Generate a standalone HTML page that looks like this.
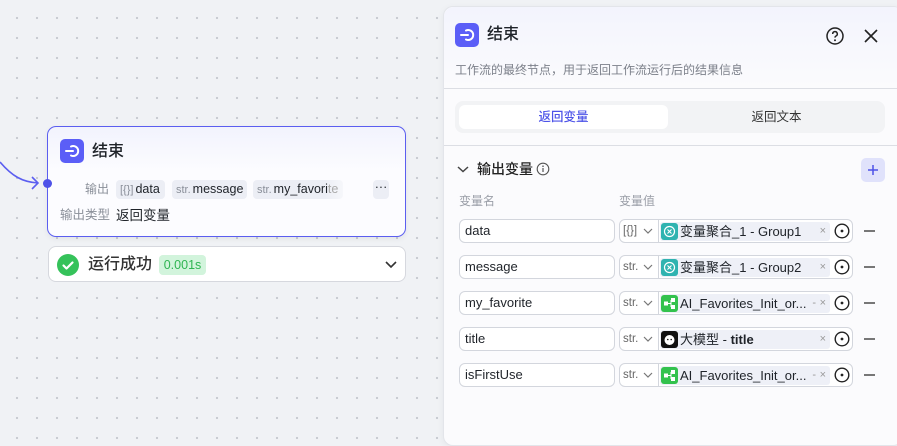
<!DOCTYPE html>
<html><head><meta charset="utf-8"><style>
*{box-sizing:border-box;margin:0;padding:0}
body{width:897px;height:438px;overflow:hidden;position:relative;font-family:"Liberation Sans","Noto Sans CJK SC",sans-serif;color:#1f2329;
background-color:#f0f2f5;background-image:radial-gradient(circle,#c9ccd2 1.1px,transparent 1.3px);background-size:20px 20px;background-position:7px 8px}
.a{position:absolute}
.node{left:47px;top:126px;width:359px;height:111px;border:1px solid #5b5ef0;border-radius:9px;background:linear-gradient(#f2f3fd,#fcfcff 40%);box-shadow:0 2px 6px rgba(0,0,0,.06)}
.ic{width:24px;height:24px;border-radius:5px;background:#5b5ef7}
.tag{height:19px;border-radius:4px;background:#eceef5;font-size:12.5px;line-height:19px;padding:0 4px;color:#1f2329;white-space:nowrap;overflow:hidden}
.tag i{font-style:normal;color:#8a8f99;font-size:11px;margin-right:2px}
.succ{left:48px;top:246px;width:358px;height:36px;border:1px solid #d6d8de;border-radius:8px;background:#fff}
.panel{left:443px;top:6px;width:460px;height:440px;background:#fbfbfd;border:1px solid #e3e5ea;border-radius:10px;box-shadow:0 2px 8px rgba(0,0,0,.05)}
.inp{height:24px;border:1px solid #d3d6dd;border-radius:6px;background:#fff;font-size:13px;line-height:22px;padding-left:5px;color:#1f2329}
.val{height:24px;border:1px solid #d3d6dd;border-radius:6px;background:#fff}
.chip{position:absolute;left:40px;top:2px;width:170px;height:19px;background:#eef0f7;border-radius:3px;font-size:13px;line-height:19px;white-space:nowrap}
.ci{position:absolute;left:1px;top:1px;width:17px;height:17px;border-radius:3px}
.chip span{position:absolute;left:20px;top:0;color:#1f2329}
.chip b{position:absolute;right:4px;top:0;font-weight:normal;color:#999;font-size:11px}
.ty{position:absolute;left:3px;top:0;font-size:11.5px;line-height:22px;color:#666}
</style></head><body>
<svg class="a" style="left:0;top:150px" width="50" height="50"><path d="M0 12 C12 26 22 32 38 33" stroke="#5b5ef0" stroke-width="1.6" fill="none"/><path d="M32 27 L38 33 L32 39" stroke="#5b5ef0" stroke-width="1.6" fill="none"/></svg>
<div class="a node">
 <div class="a ic" style="left:12px;top:12px"><svg width="24" height="24"><path d="M6 12h7" stroke="#fff" stroke-width="2" stroke-linecap="round"/><path d="M11 7.5a5 5 0 1 1 0 9" stroke="#fff" stroke-width="2" fill="none" stroke-linecap="round"/></svg></div>
 <div class="a" style="left:44px;top:14px;font-size:16px;font-weight:500;line-height:22px">结束</div>
 <div class="a" style="left:37px;top:53px;font-size:12px;color:#8a8f99;line-height:19px">输出</div>
 <div class="a tag" style="left:68px;top:53px;width:49px"><i>[{}]</i>data</div>
 <div class="a tag" style="left:124px;top:53px;width:75px"><i>str.</i>message</div>
 <div class="a tag" style="left:205px;top:53px;width:90px;background:linear-gradient(90deg,#eceef5 80%,#f6f7fb)"><i>str.</i>my_favori<span style="color:#aaa">te</span></div>
 <div class="a tag" style="left:325px;top:53px;width:16px;text-align:center;padding:0;line-height:15px">···</div>
 <div class="a" style="left:12px;top:79px;font-size:12.5px;color:#8a8f99;line-height:19px">输出类型</div>
 <div class="a" style="left:68px;top:79px;font-size:13.5px;line-height:19px">返回变量</div>
</div>
<div class="a" style="left:43px;top:179px;width:9px;height:9px;border-radius:50%;background:#4f52e8"></div>
<div class="a succ">
 <svg class="a" style="left:8px;top:7px" width="22" height="22"><circle cx="11" cy="11" r="11" fill="#35c25a"/><path d="M6.5 11.5l3 3 6-6" stroke="#fff" stroke-width="2.2" fill="none" stroke-linecap="round" stroke-linejoin="round"/></svg>
 <div class="a" style="left:39px;top:7px;font-size:16px;font-weight:500;line-height:22px;color:#333">运行成功</div>
 <div class="a" style="left:110px;top:8px;width:47px;height:20px;border-radius:4px;background:#d2f4dc;color:#2fb552;font-size:12.5px;line-height:20px;text-align:center">0.001s</div>
 <svg class="a" style="left:336px;top:13px" width="12" height="10"><path d="M1 2l5 5 5-5" stroke="#333" stroke-width="1.6" fill="none"/></svg>
</div>

<div class="a panel">
 <div class="a" style="left:0;top:0;width:460px;height:80px;background:linear-gradient(#f3f4fd,#fbfbfd);border-radius:10px 10px 0 0"></div>
 <div class="a ic" style="left:11px;top:16px"><svg width="24" height="24"><path d="M6 12h7" stroke="#fff" stroke-width="2" stroke-linecap="round"/><path d="M11 7.5a5 5 0 1 1 0 9" stroke="#fff" stroke-width="2" fill="none" stroke-linecap="round"/></svg></div>
 <div class="a" style="left:43px;top:17px;font-size:16px;font-weight:500;line-height:22px">结束</div>
 <svg class="a" style="left:381px;top:19px" width="20" height="20"><circle cx="10" cy="10" r="8" stroke="#222" stroke-width="1.5" fill="none"/><path d="M7.7 8a2.3 2.3 0 1 1 3.3 2c-.8.4-1 .9-1 1.6" stroke="#222" stroke-width="1.5" fill="none"/><circle cx="10" cy="14.3" r="1" fill="#222"/></svg>
 <svg class="a" style="left:420px;top:22px" width="14" height="14"><path d="M1 1l12 12M13 1L1 13" stroke="#222" stroke-width="1.6"/></svg>
 <div class="a" style="left:11px;top:54px;font-size:12px;color:#7c808a;line-height:18px">工作流的最终节点，用于返回工作流运行后的结果信息</div>
 <div class="a" style="left:0;top:81px;width:460px;height:1px;background:#dcdee4"></div>
 <div class="a" style="left:11px;top:94px;width:430px;height:32px;border-radius:8px;background:#f2f3f5"></div>
 <div class="a" style="left:15px;top:98px;width:209px;height:24px;border-radius:6px;background:#fff;color:#4d53e8;font-size:12.5px;font-weight:500;line-height:24px;text-align:center">返回变量</div>
 <div class="a" style="left:224px;top:98px;width:217px;height:24px;color:#333;font-size:12.5px;line-height:24px;text-align:center">返回文本</div>
 <div class="a" style="left:0;top:138px;width:460px;height:1px;background:#dcdee4"></div>
 <svg class="a" style="left:13px;top:158px" width="12" height="9"><path d="M1 2l5 4.5 5-4.5" stroke="#444" stroke-width="1.5" fill="none"/></svg>
 <div class="a" style="left:33px;top:152px;font-size:14px;font-weight:500;line-height:20px;color:#222">输出变量</div>
 <svg class="a" style="left:92px;top:155px" width="14" height="14"><circle cx="7" cy="7" r="5.8" stroke="#555" stroke-width="1.1" fill="none"/><path d="M7 6v4" stroke="#555" stroke-width="1.2"/><circle cx="7" cy="4.2" r=".8" fill="#555"/></svg>
 <div class="a" style="left:417px;top:151px;width:24px;height:24px;border-radius:5px;background:#e0e2fb"><svg width="24" height="24"><path d="M12 7v10M7 12h10" stroke="#4d53e8" stroke-width="1.5"/></svg></div>
 <div class="a" style="left:15px;top:186px;font-size:12px;color:#9a9ea7;line-height:16px">变量名</div>
 <div class="a" style="left:175px;top:186px;font-size:12px;color:#9a9ea7;line-height:16px">变量值</div>
</div>
<div id="rows"></div>
<script>
var R=[["data","[{}]","t","变量聚合_1 - Group1"],["message","str.","t","变量聚合_1 - Group2"],["my_favorite","str.","g","AI_Favorites_Init_or...","-"],["title","str.","k","大模型 - <b style='position:static;color:#1f2329;font-weight:bold;font-size:13px'>title</b>"],["isFirstUse","str.","g","AI_Favorites_Init_or...","-"]];
var h="";
R.forEach(function(r,i){var y=219+i*36;
var ic=r[2]=="t"?'<div class="ci" style="background:#2fb3b0"><svg width="17" height="17"><circle cx="8.5" cy="8.5" r="5" stroke="#fff" stroke-width="1.2" fill="none"/><path d="M6.5 6.5l4 4M10.5 6.5l-4 4" stroke="#fff" stroke-width="1.1"/></svg></div>':r[2]=="g"?'<div class="ci" style="background:#33c24d"><svg width="17" height="17"><rect x="3" y="6.5" width="4" height="4" fill="#fff"/><rect x="10" y="3" width="4" height="4" fill="#fff"/><rect x="10" y="10" width="4" height="4" fill="#fff"/><path d="M7 8.5h3M10 5v7" stroke="#fff"/></svg></div>':'<div class="ci" style="background:#111"><svg width="17" height="17"><circle cx="8.5" cy="9" r="5" fill="#fff"/><circle cx="6.8" cy="8.5" r=".8" fill="#111"/><circle cx="10.2" cy="8.5" r=".8" fill="#111"/></svg></div>';
h+='<div class="a inp" style="left:459px;top:'+y+'px;width:156px">'+r[0]+'</div>';
h+='<div class="a val" style="left:619px;top:'+y+'px;width:234px"><div class="ty">'+r[1]+'</div><svg class="a" style="left:23px;top:8px" width="10" height="7"><path d="M1 1l4 4 4-4" stroke="#777" stroke-width="1.2" fill="none"/></svg><div class="a" style="left:38px;top:0;width:1px;height:22px;background:#d3d6dd"></div><div class="chip">'+ic+'<span>'+r[3]+'</span>'+(r[4]?'<b style="right:14px">-</b>':'')+'<b>×</b></div><svg class="a" style="left:214px;top:3px" width="16" height="16"><circle cx="8" cy="8" r="6.8" stroke="#222" stroke-width="1.4" fill="none"/><circle cx="8" cy="8" r="1.4" fill="#222"/></svg></div>';
h+='<div class="a" style="left:864px;top:'+(y+11)+'px;width:11px;height:1.5px;background:#777"></div>';
});
document.getElementById("rows").innerHTML=h;
</script>
</body></html>
